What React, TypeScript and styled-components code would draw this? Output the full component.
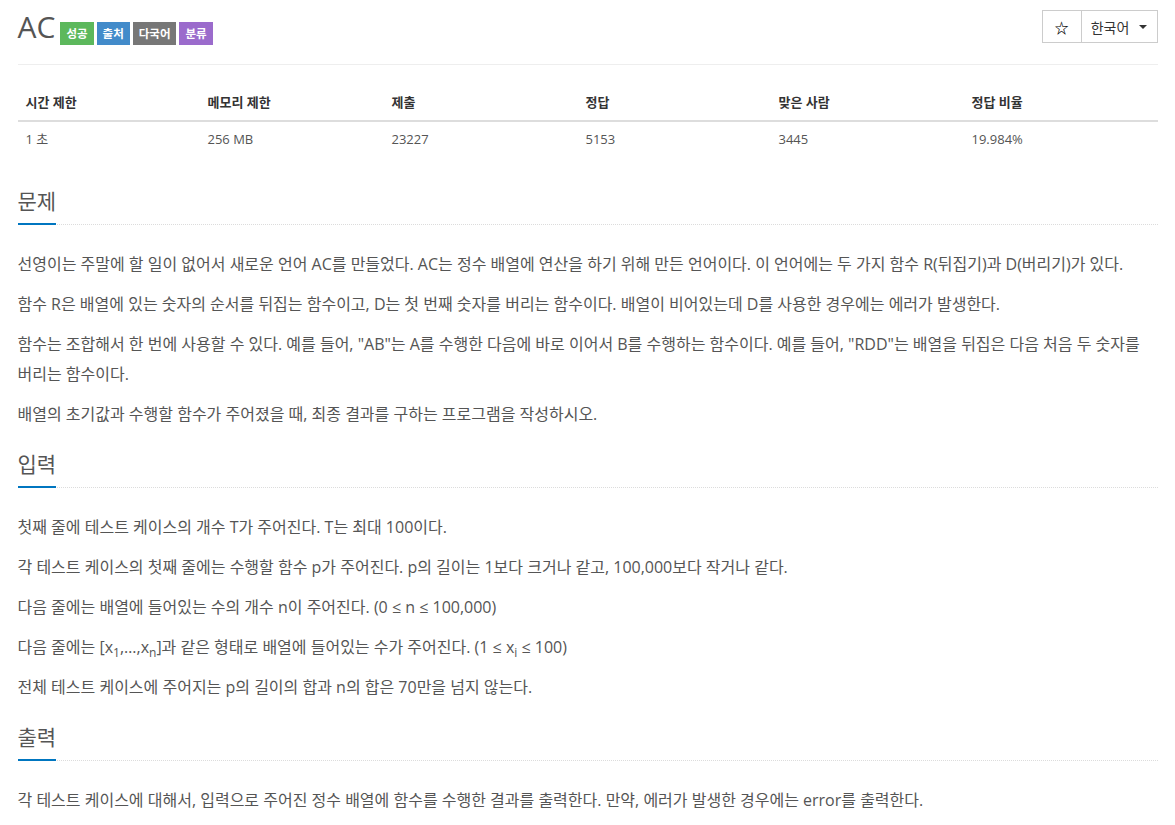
import React from 'react';
import styled, { createGlobalStyle } from 'styled-components';

const GlobalStyle = createGlobalStyle`
  html, body { margin: 0; padding: 0; background: #fff; }
  body {
    font-family: "Open Sans", "Noto Sans CJK KR", sans-serif;
    color: #555;
    font-size: 14px;
  }
`;

const Container = styled.div`
  width: 1140px;
  margin: 0 auto;
`;

const PageHeader = styled.div`
  display: flex;
  justify-content: space-between;
  align-items: flex-start;
  padding: 10px 0 21px;
  border-bottom: 1px solid #eee;
`;

const Title = styled.h1`
  display: flex;
  align-items: baseline;
  height: 33px;
  margin: 0;
  font-size: 30px;
  line-height: 33px;
  font-weight: 400;
  color: #555;
`;

const TitleText = styled.span`
  margin-right: 5px;
`;

const Label = styled.span<{ $bg: string }>`
  display: inline-block;
  height: 23px;
  line-height: 23px;
  padding: 0 6px;
  margin-right: 3px;
  font-size: 11.5px;
  font-weight: 700;
  color: #fff;
  background: ${(p) => p.$bg};
`;

const ButtonGroup = styled.div`
  display: flex;
`;

const Button = styled.button<{ $w: number }>`
  box-sizing: border-box;
  width: ${(p) => p.$w}px;
  height: 33px;
  margin: 0;
  padding: 0;
  display: flex;
  align-items: center;
  justify-content: center;
  border: 1px solid #ccc;
  background: #fff;
  color: #333;
  font-family: "Open Sans", "Noto Sans CJK KR", sans-serif;
  font-size: 14px;
  & + & { margin-left: -1px; }
`;

const Star = styled.span`
  font-family: "Noto Sans CJK KR", "DejaVu Sans", sans-serif;
  font-size: 14px;
  font-weight: 700;
  line-height: 1;
  color: #000;
`;

const Caret = styled.span`
  display: inline-block;
  width: 0;
  height: 0;
  margin-left: 10px;
  border-top: 4px solid #333;
  border-left: 4px solid transparent;
  border-right: 4px solid transparent;
`;

const Table = styled.table`
  width: 100%;
  border-collapse: collapse;
  margin: 20px 0 34px;
  table-layout: fixed;
`;

const Th = styled.th`
  text-align: left;
  padding: 8px;
  font-size: 13px;
  line-height: 18.57px;
  font-weight: 700;
  color: #333;
  border-bottom: 2px solid #ddd;
`;

const Td = styled.td`
  padding: 8px;
  font-size: 13px;
  line-height: 18.57px;
  color: #555;
`;

const Section = styled.section`
  margin-top: 24px;
`;

const Headline = styled.div`
  display: flex;
  border-bottom: 1px dotted #dcdcdc;
  margin-bottom: 24px;
`;

const H2 = styled.h2`
  margin: 0 0 -1px;
  padding-bottom: 10px;
  border-bottom: 2px solid #0076c0;
  font-size: 21px;
  line-height: 23px;
  font-weight: 400;
  color: #555;
`;

const P = styled.p`
  margin: 0 0 10px;
  font-size: 16px;
  line-height: 30px;
  color: #555;
`;

const Sub = styled.sub`
  font-size: 75%;
  line-height: 0;
`;

const cols = [182, 184, 194, 193, 193, 194];
const heads = ['시간 제한', '메모리 제한', '제출', '정답', '맞은 사람', '정답 비율'];
const vals = ['1 초', '256 MB', '23227', '5153', '3445', '19.984%'];

export default function App() {
  return (
    <>
      <GlobalStyle />
      <Container>
        <PageHeader>
          <Title>
            <TitleText>AC</TitleText>
            <Label $bg="#5cb85c">성공</Label>
            <Label $bg="#428bca">출처</Label>
            <Label $bg="#777777">다국어</Label>
            <Label $bg="#9b6bcc">분류</Label>
          </Title>
          <ButtonGroup>
            <Button $w={40}><Star>☆</Star></Button>
            <Button $w={77}>한국어<Caret /></Button>
          </ButtonGroup>
        </PageHeader>

        <Table>
          <colgroup>
            {cols.map((w, i) => <col key={i} style={{ width: w }} />)}
          </colgroup>
          <thead>
            <tr>{heads.map((h) => <Th key={h}>{h}</Th>)}</tr>
          </thead>
          <tbody>
            <tr>{vals.map((v) => <Td key={v}>{v}</Td>)}</tr>
          </tbody>
        </Table>

        <Section>
          <Headline><H2>문제</H2></Headline>
          <P>선영이는 주말에 할 일이 없어서 새로운 언어 AC를 만들었다. AC는 정수 배열에 연산을 하기 위해 만든 언어이다. 이 언어에는 두 가지 함수 R(뒤집기)과 D(버리기)가 있다.</P>
          <P>함수 R은 배열에 있는 숫자의 순서를 뒤집는 함수이고, D는 첫 번째 숫자를 버리는 함수이다. 배열이 비어있는데 D를 사용한 경우에는 에러가 발생한다.</P>
          <P>함수는 조합해서 한 번에 사용할 수 있다. 예를 들어, "AB"는 A를 수행한 다음에 바로 이어서 B를 수행하는 함수이다. 예를 들어, "RDD"는 배열을 뒤집은 다음 처음 두 숫자를 버리는 함수이다.</P>
          <P>배열의 초기값과 수행할 함수가 주어졌을 때, 최종 결과를 구하는 프로그램을 작성하시오.</P>
        </Section>

        <Section>
          <Headline><H2>입력</H2></Headline>
          <P>첫째 줄에 테스트 케이스의 개수 T가 주어진다. T는 최대 100이다.</P>
          <P>각 테스트 케이스의 첫째 줄에는 수행할 함수 p가 주어진다. p의 길이는 1보다 크거나 같고, 100,000보다 작거나 같다.</P>
          <P>다음 줄에는 배열에 들어있는 수의 개수 n이 주어진다. (0 ≤ n ≤ 100,000)</P>
          <P>다음 줄에는 [x<Sub>1</Sub>,…,x<Sub>n</Sub>]과 같은 형태로 배열에 들어있는 수가 주어진다. (1 ≤ x<Sub>i</Sub> ≤ 100)</P>
          <P>전체 테스트 케이스에 주어지는 p의 길이의 합과 n의 합은 70만을 넘지 않는다.</P>
        </Section>

        <Section>
          <Headline><H2>출력</H2></Headline>
          <P>각 테스트 케이스에 대해서, 입력으로 주어진 정수 배열에 함수를 수행한 결과를 출력한다. 만약, 에러가 발생한 경우에는 error를 출력한다.</P>
        </Section>
      </Container>
    </>
  );
}
